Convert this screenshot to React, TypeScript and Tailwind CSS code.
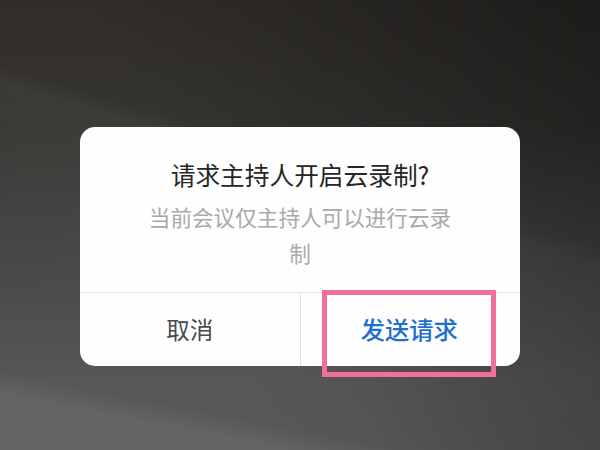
export default function App() {
  return (
    <div
      className="relative flex h-[450px] w-[600px] items-start justify-center overflow-hidden pt-[127px] bg-[#3a3836]"
      style={{ fontFamily: '"Noto Sans CJK SC", "Liberation Sans", sans-serif' }}
    >
      <div className="absolute inset-0 bg-[linear-gradient(180deg,#302d2a_0%,#363431_28%,#4a4847_60%,#585657_85%,#5a5758_100%)]" />
      <div className="absolute inset-0 bg-[linear-gradient(197deg,rgba(255,255,255,0)_39%,rgba(255,255,255,0.04)_42%,rgba(255,255,255,0)_75%)]" />
      <div className="absolute inset-0 bg-[linear-gradient(191deg,rgba(255,255,255,0)_86%,rgba(255,255,255,0.07)_90%,rgba(255,255,255,0.07)_100%)]" />
      <div className="absolute inset-0 bg-[linear-gradient(235deg,rgba(0,0,0,0.32)_0%,rgba(0,0,0,0.1)_42%,rgba(0,0,0,0)_58%)]" />
      <div className="absolute inset-0 bg-[linear-gradient(270deg,rgba(0,0,0,0.1)_0%,rgba(0,0,0,0)_60%)]" />

      <div className="relative flex h-[239px] w-[440px] flex-col rounded-[15px] bg-[#fefefe]">
        <div className="flex h-[165px] flex-col items-center px-[60px] pt-[29px] text-center">
          <div className="text-[24.7px] leading-[36px] text-[#262626]">请求主持人开启云录制?</div>
          <div className="mt-[7px] text-[21.6px] leading-[36px] text-[#a9a9a9]">当前会议仅主持人可以进行云录制</div>
        </div>
        <div className="flex flex-1 border-t-[1.5px] border-[#e3e3e3]">
          <div className="flex flex-1 items-center justify-center border-r-[1.5px] border-[#e0e0e0] text-[23.5px] text-[#4a4a4a]">
            取消
          </div>
          <div className="flex flex-1 items-center justify-center text-[24.3px] font-medium text-[#1e6fd0]">
            <span className="ml-[-2px]">发送请求</span>
          </div>
        </div>
        <div className="absolute left-[242px] top-[163px] h-[87px] w-[174px] border-[5px] border-[#f06f9b]" />
      </div>
    </div>
  );
}
